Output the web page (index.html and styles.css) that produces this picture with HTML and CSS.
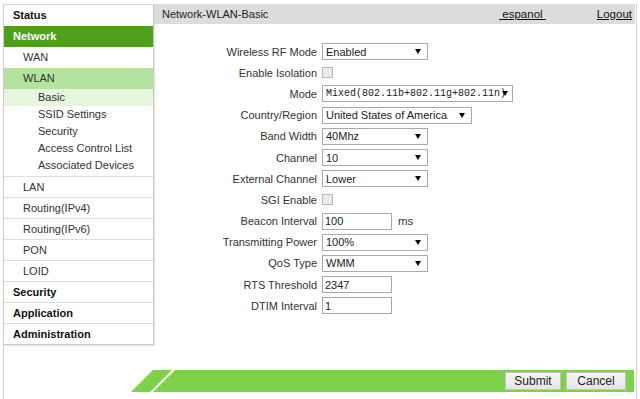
FILE: index.html
```html
<!DOCTYPE html>
<html lang="en">
<head>
    <meta charset="UTF-8">
    <title>Network-WLAN-Basic</title>
    <link rel="stylesheet" href="styles.css">
</head>
<body>
<div id="frame">
    <ul id="menu">
        <li class="top">Status</li>
        <li class="top on">Network</li>
        <li class="mid">WAN</li>
        <li class="mid open">WLAN</li>
        <li class="leaves">
            <ul>
                <li class="active">Basic</li>
                <li>SSID Settings</li>
                <li>Security</li>
                <li>Access Control List</li>
                <li>Associated Devices</li>
            </ul>
        </li>
        <li class="mid line">LAN</li>
        <li class="mid line">Routing(IPv4)</li>
        <li class="mid line">Routing(IPv6)</li>
        <li class="mid line">PON</li>
        <li class="mid line">LOID</li>
        <li class="top line">Security</li>
        <li class="top line">Application</li>
        <li class="top line">Administration</li>
    </ul>
    <div id="main">
        <div class="head">
            <span class="title">Network-WLAN-Basic</span>
            <a class="lang">&nbsp;espanol&nbsp;</a>
            <a class="logout">Logout</a>
        </div>
        <div class="form">
            <div class="row">
                <label>Wireless RF Mode</label>
                <span class="sel w106"><select><option>Enabled</option></select></span>
            </div>
            <div class="row">
                <label>Enable Isolation</label>
                <span><input type="checkbox" class="chk"></span>
            </div>
            <div class="row">
                <label>Mode</label>
                <span class="sel w191"><select class="mono"><option>Mixed(802.11b+802.11g+802.11n)</option></select></span>
            </div>
            <div class="row">
                <label>Country/Region</label>
                <span class="sel w150"><select><option>United States of America</option></select></span>
            </div>
            <div class="row">
                <label>Band Width</label>
                <span class="sel w106"><select><option>40Mhz</option></select></span>
            </div>
            <div class="row">
                <label>Channel</label>
                <span class="sel w106"><select><option>10</option></select></span>
            </div>
            <div class="row">
                <label>External Channel</label>
                <span class="sel w106"><select><option>Lower</option></select></span>
            </div>
            <div class="row">
                <label>SGI Enable</label>
                <span><input type="checkbox" class="chk"></span>
            </div>
            <div class="row">
                <label>Beacon Interval</label>
                <span><input type="text" class="txt" value="100"><span class="unit">ms</span></span>
            </div>
            <div class="row">
                <label>Transmitting Power</label>
                <span class="sel w106"><select><option>100%</option></select></span>
            </div>
            <div class="row">
                <label>QoS Type</label>
                <span class="sel w106"><select><option>WMM</option></select></span>
            </div>
            <div class="row">
                <label>RTS Threshold</label>
                <span><input type="text" class="txt" value="2347"></span>
            </div>
            <div class="row">
                <label>DTIM Interval</label>
                <span><input type="text" class="txt" value="1"></span>
            </div>
        </div>
        <div class="foot">
            <svg class="slant" width="44" height="22" viewBox="0 0 44 22">
                <polygon points="0,22 22,0 41,0 19,22" fill="#7dd24a"/>
                <polygon points="22,22 44,0 44,22" fill="#7dd24a"/>
            </svg>
            <div class="bar">
                <button class="btn">Submit</button>
                <button class="btn">Cancel</button>
            </div>
        </div>
    </div>
</div>
</body>
</html>
```

FILE: styles.css
```css
*{
    margin: 0;
    padding: 0;
    list-style: none;
    box-sizing: border-box;
}
html,body{
    width: 100%;
    height: 100%;
    background: #fff;
    font-family: "Liberation Sans", Arial, sans-serif;
    font-size: 11px;
    color: #333;
}
#frame{
    display: flex;
    align-items: flex-start;
    margin: 4px 0 0 3px;
    width: 634px;
    height: calc(100vh - 4px);
    border-left: 1px solid #cfcfcf;
    border-right: 1px solid #cfcfcf;
}
#menu{
    width: 150px;
    flex: none;
    border-top: 1px solid #d6d6d6;
    border-right: 1px solid #c8c8c8;
    border-bottom: 1px solid #c8c8c8;
    box-shadow: 1px 1px 2px rgba(0,0,0,.12);
}
#menu > li{
    height: 21px;
    line-height: 21px;
}
#menu li.top{
    padding-left: 9px;
    font-weight: bold;
    color: #111;
}
#menu li.on{
    background: #4ea01b;
    color: #fff;
}
#menu li.mid{
    padding-left: 19px;
}
#menu li.open{
    background: #b4e39d;
}
#menu li.line{
    border-top: 1px solid #dedede;
}
#menu li.leaves{
    height: auto;
    padding-bottom: 2px;
}
#menu .leaves li{
    height: 17px;
    line-height: 17px;
    padding-left: 34px;
}
#menu .leaves li.active{
    background: #e6f5dd;
}

#main{
    flex: 1;
    height: 100%;
    display: flex;
    flex-direction: column;
    padding-bottom: 7px;
}
.head{
    display: flex;
    align-items: center;
    height: 20px;
    margin-right: 1px;
    padding: 0 3px 0 8px;
    background: #dcdcdc;
    color: #222;
}
.head .title{
    flex: 1;
}
.head a{
    color: #111;
    text-decoration: underline;
    cursor: pointer;
    font-size: 11.5px;
}
.head .lang{
    margin-right: 51px;
}

.form{
    padding-top: 17px;
}
.row{
    display: grid;
    grid-template-columns: 163px 1fr;
    column-gap: 5px;
    align-items: center;
    height: 21.2px;
}
.row label{
    text-align: right;
}
.sel{
    position: relative;
    display: inline-block;
    vertical-align: middle;
}
.sel select{
    width: 100%;
    height: 17px;
    padding: 0 0 0 3px;
    border: 1px solid #a9a9a9;
    border-radius: 0;
    background: #fff;
    -webkit-appearance: none;
    appearance: none;
    font-family: "Liberation Sans", Arial, sans-serif;
    font-size: 11px;
    color: #222;
    outline: none;
}
.sel select.mono{
    font-family: "Liberation Mono", "Courier New", monospace;
    font-size: 10px;
    padding-right: 8px;
}
.sel::after{
    content: "";
    position: absolute;
    right: 7px;
    top: 6px;
    border-left: 3px solid transparent;
    border-right: 3px solid transparent;
    border-top: 5px solid #000;
}
.w106{ width: 106px; }
.w150{ width: 150px; }
.w191{ width: 191px; }
.w191::after{ right: 5px; }
.chk{
    -webkit-appearance: none;
    appearance: none;
    display: block;
    width: 11px;
    height: 11px;
    border: 1px solid #b9b9b9;
    background: #ececec;
}
.txt{
    width: 70px;
    height: 17px;
    padding: 0 2px;
    border: 1px solid #a9a9a9;
    font-family: "Liberation Sans", Arial, sans-serif;
    font-size: 11px;
    color: #222;
    vertical-align: middle;
    outline: none;
}
.unit{
    margin-left: 6px;
    font-size: 11.5px;
    vertical-align: middle;
}

.foot{
    margin-top: auto;
    margin-left: -23px;
    margin-right: 2px;
    display: flex;
    height: 22px;
}
.slant{
    display: block;
    flex: none;
}
.bar{
    flex: 1;
    background: #7dd24a;
    display: flex;
    justify-content: flex-end;
    align-items: center;
    gap: 5px;
    padding-right: 8px;
}
.btn{
    height: 18px;
    border: 1px solid #c4c4c4;
    background: linear-gradient(#f7f7f7, #e4e4e4);
    font-family: "Liberation Sans", Arial, sans-serif;
    font-size: 12px;
    color: #222;
    cursor: pointer;
}
.btn:first-child{ width: 56px; }
.btn:last-child{ width: 60px; }
```
